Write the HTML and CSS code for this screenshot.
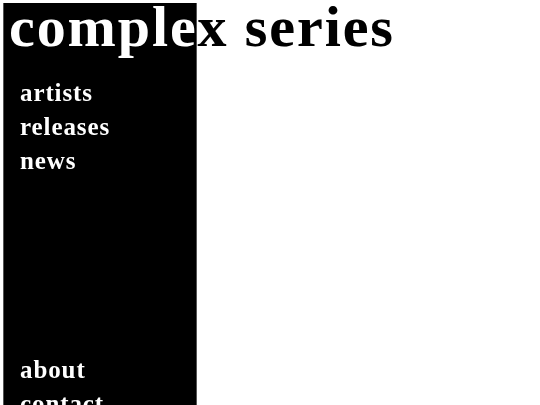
FILE: index.html
```html
<!DOCTYPE html>
<html>
<head>
<meta charset="utf-8">
<link rel="stylesheet" href="styles.css">
</head>
<body>
<div class="page">
  <aside class="sidebar">
    <ul class="nav">
      <li><a href="#">artists</a></li>
      <li><a href="#">releases</a></li>
      <li><a href="#">news</a></li>
    </ul>
    <ul class="nav nav-lower">
      <li><a href="#">about</a></li>
      <li><a href="#">contact</a></li>
    </ul>
  </aside>
  <h1 class="title">complex series</h1>
</div>
</body>
</html>
```
FILE: styles.css
```css
html, body {
  margin: 0;
  padding: 0;
  background: #fff;
}
.page {
  position: relative;
  display: flex;
  padding: 3px 0 0 3px;
  height: 100vh;
  overflow: hidden;
  box-sizing: border-box;
  font-family: "Liberation Serif", "Times New Roman", serif;
  isolation: isolate;
  background: #fff;
}
.sidebar {
  width: 194px;
  flex: none;
  background: #000;
  border-left: 1px solid #555;
  border-right: 1px solid #555;
  padding: 73px 0 0 16px;
  box-sizing: border-box;
}
.nav {
  list-style: none;
  margin: 0;
  padding: 0;
}
.nav li {
  font-size: 25px;
  line-height: 34px;
  font-weight: bold;
  letter-spacing: 0.9px;
  white-space: nowrap;
}
.nav a {
  color: #fff;
  text-decoration: none;
}
.nav-lower {
  margin-top: 175px;
}
.title {
  position: absolute;
  top: -2px;
  left: 9px;
  margin: 0;
  font-size: 58px;
  line-height: 1;
  font-weight: bold;
  letter-spacing: 1.9px;
  color: #fff;
  mix-blend-mode: difference;
  white-space: nowrap;
}
```
